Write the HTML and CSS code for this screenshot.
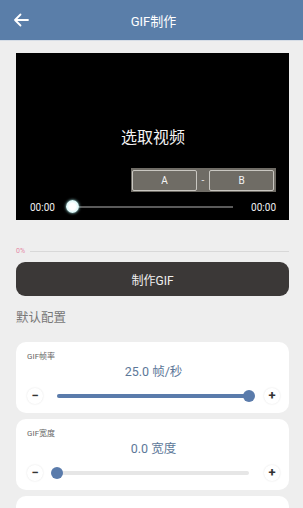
FILE: index.html
```html
<!DOCTYPE html>
<html lang="zh">
<head>
<meta charset="utf-8">
<link rel="stylesheet" href="styles.css">
</head>
<body>
<header class="topbar">
  <svg class="back" width="16" height="14" viewBox="0 0 16 14"><path d="M15 7H2M7.5 1.5L2 7l5.5 5.5" fill="none" stroke="#fff" stroke-width="1.8" stroke-linecap="round" stroke-linejoin="round"/></svg>
  <div class="title">GIF制作</div>
</header>
<main class="content">
  <section class="video">
    <div class="pick">选取视频</div>
    <div class="ab">
      <div class="abbtn">A</div>
      <span class="dash">-</span>
      <div class="abbtn">B</div>
    </div>
    <div class="timeline">
      <span class="time">00:00</span>
      <div class="tslider"><span class="tthumb"></span></div>
      <span class="time">00:00</span>
    </div>
  </section>
  <div class="progress"><span class="pct">0%</span><span class="pline"></span></div>
  <button class="make">制作GIF</button>
  <div class="sect">默认配置</div>
  <div class="card">
    <div class="label">GIF帧率</div>
    <div class="value">25.0 帧/秒</div>
    <div class="srow">
      <span class="pm">−</span>
      <div class="slider"><div class="track"><div class="fill" style="width:100%"></div><span class="thumb" style="left:100%"></span></div></div>
      <span class="pm">+</span>
    </div>
  </div>
  <div class="card">
    <div class="label">GIF宽度</div>
    <div class="value">0.0 宽度</div>
    <div class="srow">
      <span class="pm">−</span>
      <div class="slider"><div class="track"><div class="fill" style="width:0%"></div><span class="thumb" style="left:0%"></span></div></div>
      <span class="pm">+</span>
    </div>
  </div>
  <div class="card"></div>
</main>
</body>
</html>
```
FILE: styles.css
```css
* { box-sizing: border-box; }
html, body { margin: 0; padding: 0; }
body {
  width: 303px;
  height: 508px;
  overflow: hidden;
  background: #eeeeee;
  font-family: Roboto, "Noto Sans CJK SC", sans-serif;
}
.topbar {
  height: 41px;
  background: #5a7ea9;
  display: flex;
  align-items: center;
  position: relative;
  border-bottom: 1px solid #d6dde6;
}
.back { position: absolute; left: 13px; top: 13px; }
.title {
  flex: 1;
  text-align: center;
  color: #fff;
  font-size: 13px;
  padding-left: 4px;
}
.content { padding: 12px 14px 0 16px; }
.video {
  height: 167px;
  background: #000;
  display: flex;
  flex-direction: column;
  padding: 74px 13px 0 14px;
}
.pick {
  color: #f2f2f2;
  font-size: 16px;
  line-height: 22px;
  text-align: center;
}
.ab {
  align-self: flex-end;
  margin-top: 19px;
  height: 24px;
  width: 145px;
  background: #6f6c65;
  display: flex;
  align-items: center;
  padding: 0 2px 0 1px;
}
.abbtn {
  width: 65px;
  height: 21px;
  border: 1px solid #c9c7c1;
  border-radius: 2px;
  color: #f4f4f4;
  font-size: 10px;
  display: flex;
  align-items: center;
  justify-content: center;
}
.dash { color: #e8e8e8; font-size: 10px; width: 12px; text-align: center; }
.timeline {
  margin-top: 8px;
  height: 14px;
  display: flex;
  align-items: center;
}
.time { color: #f0f0f0; font-size: 10px; }
.tslider {
  flex: 1;
  height: 2px;
  background: #5a5a5a;
  margin: 0 18px 0 11px;
  position: relative;
}
.tthumb {
  position: absolute;
  left: 0;
  top: -6px;
  width: 13px;
  height: 13px;
  border-radius: 50%;
  background: radial-gradient(circle, #ffffff 35%, #c8f4f4 80%, #8fe6e6 100%);
  box-shadow: 0 0 3px #aef3f3;
}
.progress {
  margin-top: 26px;
  height: 10px;
  display: flex;
  align-items: center;
}
.pct { color: #e58aa8; font-size: 7px; width: 14px; }
.pline { flex: 1; height: 1px; background: #d8d8d8; }
.make {
  display: block;
  width: 100%;
  height: 34px;
  margin-top: 6px;
  border: none;
  border-radius: 9px;
  background: #3b3837;
  color: #f0f0f0;
  font-family: inherit;
  font-size: 12px;
}
.sect {
  margin-top: 13px;
  font-size: 12.5px;
  line-height: 18px;
  color: #777;
}
.card {
  margin-top: 15px;
  height: 71px;
  background: #fff;
  border-radius: 10px;
  padding: 10px 9px 0 11px;
}
.card + .card { margin-top: 6px; }
.label {
  font-size: 8px;
  line-height: 10px;
  color: #666;
}
.value {
  margin-top: 2px;
  font-size: 12.5px;
  line-height: 16px;
  text-align: center;
  color: #5d7899;
}
.srow {
  margin-top: 6px;
  height: 20px;
  display: flex;
  align-items: center;
}
.pm {
  width: 16px;
  height: 16px;
  border-radius: 50%;
  background: #fff;
  box-shadow: 0 0 2px rgba(0,0,0,0.12);
  color: #333;
  font-size: 13px;
  font-weight: bold;
  line-height: 16px;
  text-align: center;
}
.slider {
  flex: 1;
  margin: 0 9px 0 8px;
  padding: 0 6px;
  height: 12px;
  display: flex;
  align-items: center;
}
.track {
  flex: 1;
  height: 4px;
  border-radius: 2px;
  background: #e6e6e6;
  position: relative;
}
.fill { height: 100%; border-radius: 2px; background: #5a7bab; }
.thumb {
  position: absolute;
  top: -4px;
  width: 12px;
  height: 12px;
  margin-left: -6px;
  border-radius: 50%;
  background: #5a7bab;
}
```
